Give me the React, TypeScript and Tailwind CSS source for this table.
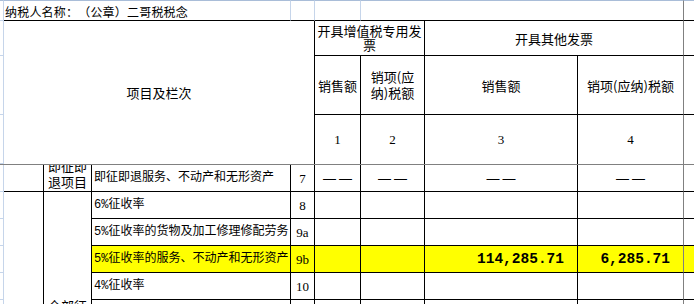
import React from "react";

const cols = "grid grid-cols-[4px_40px_48px_199px_24px_46px_64px_153px_106px_10px]";

type CellProps = { className?: string; children?: React.ReactNode };

function Cell({ className = "", children }: CellProps) {
  return <div className={"flex items-center justify-center overflow-hidden " + className}>{children}</div>;
}

function Dashes() {
  return (
    <span className="flex gap-[3px] font-['Liberation_Sans',sans-serif] text-[13px]">
      <span>—</span>
      <span>—</span>
    </span>
  );
}

const edge = "col-start-1 border-r border-b border-r-[#c6d5ea] border-b-[#c6d5ea]";
const num = "font-['Liberation_Serif',serif] text-[13px]";
const label = "justify-start pl-[2px] font-['Liberation_Mono','Noto_Sans_CJK_SC',monospace] text-[12px] whitespace-nowrap";
const money = "justify-end font-['Liberation_Mono',monospace] text-[14.5px] font-bold";

const rows = [
  { no: "8", label: "6%征收率", hi: false },
  { no: "9a", label: "5%征收率的货物及加工修理修配劳务", hi: false },
  { no: "9b", label: "5%征收率的服务、不动产和无形资产", hi: true },
  { no: "10", label: "4%征收率", hi: false },
  { no: "", label: "", hi: false },
];

const starts = ["row-start-2", "row-start-3", "row-start-4", "row-start-5", "row-start-6"];

export default function App() {
  return (
    <div className="h-[304px] w-[694px] overflow-hidden bg-white font-['Noto_Sans_CJK_SC',sans-serif] leading-none text-black [text-spacing-trim:space-all]">
      {/* frozen header */}
      <div className={cols + " grid-rows-[21px_35px_59px_49px]"}>
        <div className={edge + " row-start-1 border-t border-t-[#a9bdd8]"} />
        <Cell className="col-start-2 col-span-3 row-start-1 justify-start border-t border-r border-b border-t-[#a9bdd8] border-r-[#c6d5ea] border-b-black pl-px pt-[3px] text-[12px] tracking-[0.2px] whitespace-nowrap">
          纳税人名称：（公章）二哥税税念
        </Cell>
        <div className="col-start-5 row-start-1 border-t border-r border-b border-t-[#a9bdd8] border-r-[#c6d5ea] border-b-black" />
        <div className="col-start-6 row-start-1 border-t border-r border-b border-t-[#a9bdd8] border-r-[#c6d5ea] border-b-black" />
        <div className="col-start-7 col-span-3 row-start-1 border-t border-r border-b border-t-[#a9bdd8] border-r-[#808080] border-b-black" />
        <div className="col-start-10 row-start-1 border-t border-b border-t-[#a9bdd8] border-b-black" />

        <div className={edge + " row-start-2"} />
        <div className={edge + " row-start-3"} />
        <div className={edge + " row-start-4"} />

        <Cell className="col-start-2 col-span-4 row-start-2 row-span-3 border-r border-black text-[13px]">项目及栏次</Cell>

        <Cell className="col-start-6 col-span-2 row-start-2 border-r border-b border-black text-center text-[13px] leading-[14px]">
          开具增值税专用发
          <br />
          票
        </Cell>
        <Cell className="col-start-8 col-span-2 row-start-2 border-r border-b border-r-[#808080] border-b-black text-[13px]">
          开具其他发票
        </Cell>
        <div className="col-start-10 row-start-2 border-b border-black" />

        <Cell className="col-start-6 row-start-3 border-r border-b border-black text-[13px]">销售额</Cell>
        <Cell className="col-start-7 row-start-3 border-r border-b border-black text-center text-[13px] leading-[16px]">
          销项(应
          <br />
          纳)税额
        </Cell>
        <Cell className="col-start-8 row-start-3 border-r border-b border-black text-[13px]">销售额</Cell>
        <Cell className="col-start-9 row-start-3 border-r border-b border-r-[#808080] border-b-black text-[13px] whitespace-nowrap">
          销项(应纳)税额
        </Cell>
        <div className="col-start-10 row-start-3 border-b border-black" />

        <Cell className={"col-start-6 row-start-4 border-r border-black " + num}>1</Cell>
        <Cell className={"col-start-7 row-start-4 border-r border-black " + num}>2</Cell>
        <Cell className={"col-start-8 row-start-4 border-r border-black " + num}>3</Cell>
        <Cell className={"col-start-9 row-start-4 border-r border-[#808080] " + num}>4</Cell>
      </div>

      <div className="h-px bg-[#808080]" />

      {/* scrolled body */}
      <div className={cols + " h-[139px] grid-rows-[27px_27px_27px_27px_27px_27px] overflow-hidden"}>
        <div className={edge + " row-start-1"} />
        <div className="col-start-2 row-start-1 border-r border-b border-black" />
        <div className="col-start-3 row-start-1 flex flex-col items-center justify-end overflow-hidden border-r border-b border-black pb-px text-[13px] leading-[16px]">
          <span>即征即</span>
          <span>退项目</span>
        </div>
        <Cell className={"col-start-4 row-start-1 border-r border-b border-black " + label}>
          即征即退服务、不动产和无形资产
        </Cell>
        <Cell className={"col-start-5 row-start-1 border-r border-b border-black " + num}>7</Cell>
        <Cell className="col-start-6 row-start-1 border-r border-b border-black">
          <Dashes />
        </Cell>
        <Cell className="col-start-7 row-start-1 border-r border-b border-black">
          <Dashes />
        </Cell>
        <Cell className="col-start-8 row-start-1 border-r border-b border-black">
          <Dashes />
        </Cell>
        <Cell className="col-start-9 row-start-1 border-r border-b border-r-[#808080] border-b-black">
          <Dashes />
        </Cell>
        <div className="col-start-10 row-start-1 border-b border-black" />

        <div className="col-start-2 row-start-2 row-span-5 border-r border-black" />
        <div className="col-start-3 row-start-2 row-span-5 overflow-hidden border-r border-black">
          <div className="mt-[106px] text-center text-[13px] leading-[16px]">
            全部征
            <br />
            税项目
          </div>
        </div>

        {rows.map((r, i) => {
          const bg = r.hi ? " bg-[#ffff00]" : "";
          const rs = starts[i];
          return (
            <React.Fragment key={i}>
              <div className={edge + " " + rs} />
              <Cell className={"col-start-4 border-r border-b border-black " + label + " " + rs + bg}>{r.label}</Cell>
              <Cell className={"col-start-5 border-r border-b border-black " + num + " " + rs + bg}>{r.no}</Cell>
              <div className={"col-start-6 border-r border-b border-black " + rs + bg} />
              <div className={"col-start-7 border-r border-b border-black " + rs + bg} />
              <Cell className={"col-start-8 border-r border-b border-black pr-[13px] " + money + " " + rs + bg}>
                {r.hi ? "114,285.71" : ""}
              </Cell>
              <Cell className={"col-start-9 border-r border-b border-r-[#808080] border-b-black pr-[13px] " + money + " " + rs + bg}>
                {r.hi ? "6,285.71" : ""}
              </Cell>
              <div className={"col-start-10 border-b border-black " + rs + bg} />
            </React.Fragment>
          );
        })}
      </div>
    </div>
  );
}
